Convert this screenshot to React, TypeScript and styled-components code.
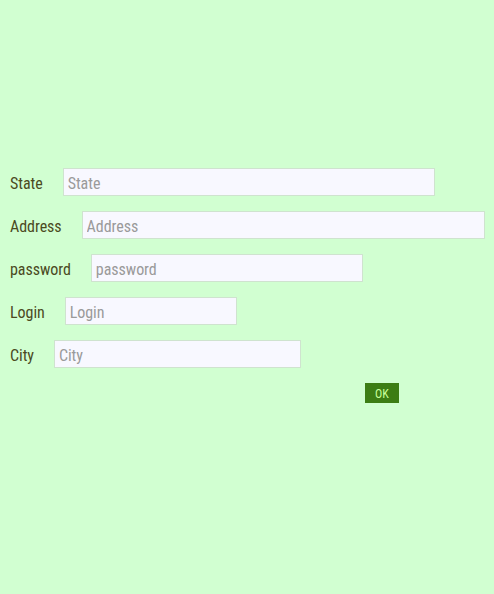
import styled, { createGlobalStyle } from 'styled-components'

const GlobalStyle = createGlobalStyle`
  html, body {
    margin: 0;
    padding: 0;
    background: #d1ffd1;
  }
`

interface Field {
  label: string
  width: number
}

const fields: Field[] = [
  { label: 'State', width: 372 },
  { label: 'Address', width: 403 },
  { label: 'password', width: 272 },
  { label: 'Login', width: 172 },
  { label: 'City', width: 247 },
]

const App = () => {
  return (
    <>
      <GlobalStyle />
      <Page>
        <Form onSubmit={(e) => e.preventDefault()}>
          {fields.map((f) => (
            <Row key={f.label}>
              <Label>{f.label}</Label>
              <Input $width={f.width} placeholder={f.label} type="text" />
            </Row>
          ))}
          <Actions>
            <OkButton type="submit">OK</OkButton>
          </Actions>
        </Form>
      </Page>
    </>
  )
}

const Page = styled.div`
  min-height: 594px;
  padding: 168px 0 0 10px;
  box-sizing: border-box;
  font-family: Roboto, 'Liberation Sans', sans-serif;
  font-stretch: 80%;
`

const Form = styled.form`
  display: flex;
  flex-direction: column;
  gap: 15px;
`

const Row = styled.div`
  display: flex;
  align-items: center;
  gap: 20px;
`

const Label = styled.label`
  font-size: 16px;
  letter-spacing: -0.05px;
  color: #4b4a1e;
  padding-top: 3px;
`

const Input = styled.input<{ $width: number }>`
  width: ${({ $width }) => $width}px;
  height: 28px;
  box-sizing: border-box;
  padding: 2px 4px 0;
  border: 1px solid #cfe3cf;
  background: #f8f8ff;
  font-family: inherit;
  font-stretch: inherit;
  font-size: 16px;
  letter-spacing: -0.05px;
  color: #333;
  outline: none;

  &::placeholder {
    color: #9a9a9a;
  }
`

const Actions = styled.div`
  display: flex;
  padding-left: 355px;
`

const OkButton = styled.button`
  width: 34px;
  height: 20px;
  padding: 2px 0 0;
  border: none;
  background: #3c7d14;
  color: #c8ff9a;
  font-family: inherit;
  font-stretch: inherit;
  font-size: 12px;
  cursor: pointer;
`

export default App
